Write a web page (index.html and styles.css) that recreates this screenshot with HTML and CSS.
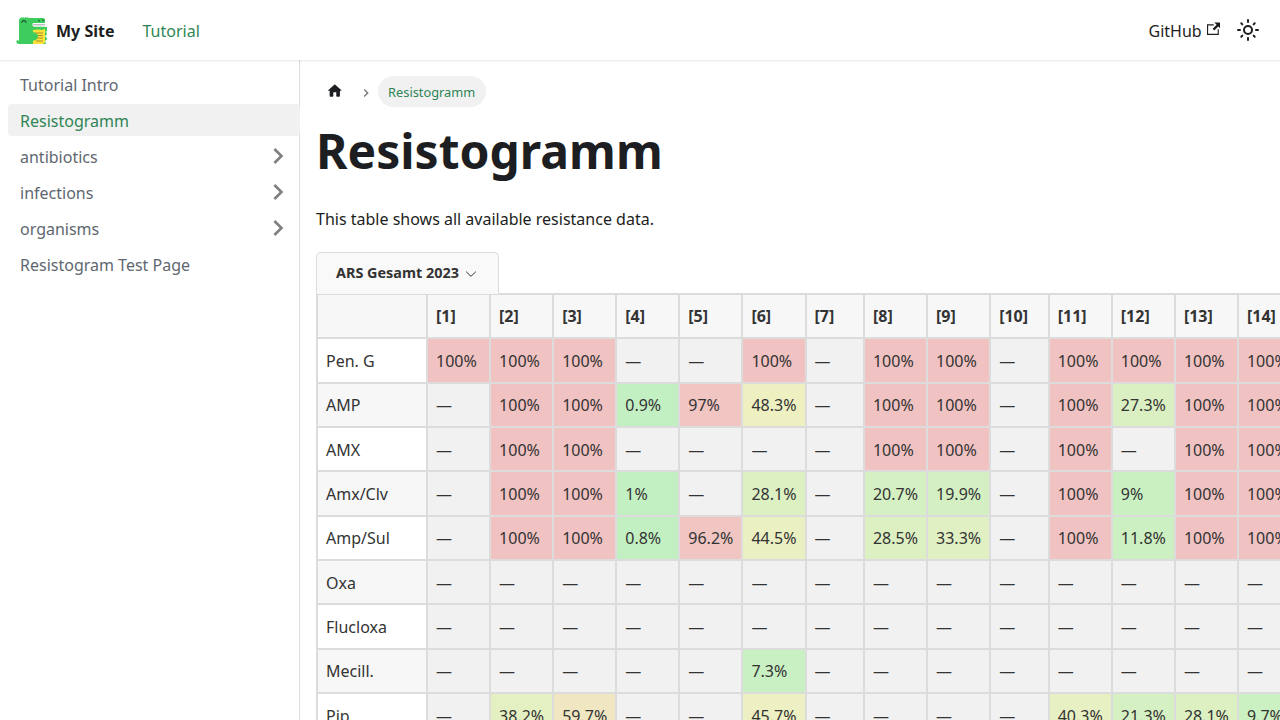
FILE: index.html
```html
<!DOCTYPE html>
<html lang="en">
<head>
<meta charset="utf-8">
<title>Resistogramm | My Site</title>
<link rel="stylesheet" href="styles.css">
</head>
<body>
<nav class="navbar">
  <a class="brand">
    <svg class="logo" viewBox="0 0 32 32" width="32" height="32">
      <path fill="#3ecc5f" d="M3 25V4.500Q3 2.500 4.500 2L5.500 1 6.500 2 7.500 1 8.500 2 9.500 1 10.500 2 11.500 1 12.500 2H27Q29 2 29 4V11H31V15L29 16V28H3Q1 28 .3 26Q.2 24.500 1.500 24Z"/>
      <path fill="#3ecc5f" d="M29 15L31.300 18 29 20 31.500 23 29 25 30 28H28V15Z"/>
      <path fill="#fff" d="M17 7H31.500V10.700H18Q16.300 10.300 16.300 8.800Z"/>
      <path fill="none" stroke="#777" stroke-width=".8" d="M17 9.300l1-1 1 1 1-1 1 1 1-1 1 1 1-1 1 1 1-1 1 1 1-1 1 1"/>
      <path fill="#ffe236" d="M17 14Q22 12.800 26 14L29 12.700V26Q28.500 27.800 26 28H17Z"/>
      <path fill="none" stroke="#887b36" stroke-width=".8" d="M19 17h8M21 19.500h6M20 22h7M20 25h7"/>
      <path fill="#3ecc5f" d="M16 16l3 .5 3 2.500v2l-2 3-4 1z"/>
      <path fill="none" stroke="#1c4f2c" stroke-width="1.100" d="M5.500 6.800L6.300 5.300Q8 3.800 9.500 5.300L10.300 6.800M22 4.800h2M26 4.300h2"/>
    </svg>
    <b>My Site</b>
  </a>
  <a class="nav-link active">Tutorial</a>
  <a class="nav-link github">GitHub<svg class="external" viewBox="0 0 24 24" width="13.500" height="13.500"><path fill="currentColor" d="M21 13v10h-21v-19h12v2h-10v15h17v-8h2zm3-12h-10.988l4.035 4-6.977 7.070 2.828 2.828 6.977-7.070 4.125 4.172v-11z"/></svg></a>
  <button class="theme-toggle" aria-label="Switch theme"><svg viewBox="0 0 24 24" width="24" height="24" fill="none" stroke="currentColor" stroke-width="2"><circle cx="12" cy="12" r="4"/><path stroke-linecap="round" d="M12 2v2M12 20v2M2 12h2M20 12h2M5.280 5.280l1.060 1.060M17.660 17.660l1.060 1.060M5.280 18.720l1.060-1.060M17.660 6.340l1.060-1.060"/></svg></button>
</nav>
<div class="layout">
  <aside class="sidebar">
    <a class="menu-item">Tutorial Intro</a>
    <a class="menu-item current">Resistogramm</a>
    <a class="menu-item">antibiotics<svg class="caret" viewBox="0 0 24 24"><path d="M7.410 15.410L12 10.830l4.590 4.580L18 14l-6-6-6 6z"/></svg></a>
    <a class="menu-item">infections<svg class="caret" viewBox="0 0 24 24"><path d="M7.410 15.410L12 10.830l4.590 4.580L18 14l-6-6-6 6z"/></svg></a>
    <a class="menu-item">organisms<svg class="caret" viewBox="0 0 24 24"><path d="M7.410 15.410L12 10.830l4.590 4.580L18 14l-6-6-6 6z"/></svg></a>
    <a class="menu-item">Resistogram Test Page</a>
  </aside>
  <main class="content">
    <div class="breadcrumbs">
      <a class="home"><svg viewBox="0 0 24 24" width="17.600" height="17.600"><path fill="currentColor" d="M10 19v-5h4v5c0 .55.45 1 1 1h3c.55 0 1-.45 1-1v-7h1.700c.46 0 .68-.57.33-.87L12.670 3.600c-.38-.34-.96-.34-1.340 0l-8.360 7.530c-.34.3-.13.87.33.87H5v7c0 .55.45 1 1 1h3c.55 0 1-.45 1-1z"/></svg></a>
      <svg class="separator" viewBox="0 0 24 24"><path d="M7.410 15.410L12 10.830l4.590 4.580L18 14l-6-6-6 6z"/></svg>
      <span class="crumb">Resistogramm</span>
    </div>
    <h1>Resistogramm</h1>
    <p class="intro">This table shows all available resistance data.</p>
    <button class="source-tab">ARS Gesamt 2023<svg viewBox="0 0 12 12" width="12" height="12" fill="none" stroke="currentColor" stroke-width="1"><path d="M1.200 3.700L6 8.300l4.800-4.600"/></svg></button>
    <table class="resistance"><colgroup id="cols"></colgroup><thead id="head"></thead><tbody id="body"></tbody></table>
  </main>
</div>
<script src="table.js"></script>
</body>
</html>
```
FILE: styles.css
```css
* { box-sizing: border-box; }
body {
  margin: 0;
  height: 720px;
  overflow: hidden;
  display: flex;
  flex-direction: column;
  background: #fff;
  color: #1c1e21;
  font: 16px/1.65 "Noto Sans", sans-serif;
}
button { font: inherit; color: inherit; border: 0; background: none; margin: 0; }
svg { flex: none; }
.navbar {
  position: relative;
  z-index: 1;
  flex: none;
  display: flex;
  align-items: center;
  height: 60px;
  padding: 1px 16px 0;
  background: #fff;
  box-shadow: 0 1px 2px 0 rgba(0, 0, 0, .1);
}
.brand { display: flex; align-items: center; gap: 8px; margin-right: 16px; }
.logo { margin-top: 2px; }
.brand b { padding-top: 1px; }
.nav-link { padding: 5px 12px 4px; }
.nav-link.active, .menu-item.current { color: #2e8555; }
.github { display: flex; margin-left: auto; padding-right: 0; }
.external { margin: 4.500px 0 0 4.800px; }
.theme-toggle { display: flex; padding: 0; margin: -1px 4px 0 16px; }
.layout { flex: 1; min-height: 0; display: flex; }
.sidebar {
  flex: none;
  width: 300px;
  padding: 8px 0 8px 8px;
  border-right: 1px solid #dadde1;
}
.menu-item {
  display: flex;
  align-items: center;
  justify-content: space-between;
  width: 292px;
  height: 32px;
  margin-bottom: 4px;
  padding: 2px 6px 0 12px;
  border-radius: 4px;
  color: #606770;
  line-height: 20px;
}
.menu-item.current { background: #f1f1f1; }
.caret { width: 32px; height: 32px; margin-top: -2px; fill: #808080; transform: rotate(90deg); }
.content { flex: 1; min-width: 0; overflow: hidden; padding: 16px 0 0 16px; }
.breadcrumbs { display: flex; align-items: center; height: 31px; }
.home { display: flex; margin: -2px 0 0 10px; }
.separator { width: 16px; height: 16px; margin: 2px 4px 0 14px; fill: #777; transform: rotate(90deg); }
.crumb {
  height: 31px;
  padding: 6px 10.500px 0;
  border-radius: 24px;
  background: #f1f1f1;
  color: #2e8555;
  font-size: 12.800px;
  line-height: 21px;
}
h1 { margin: 14px 0 25px; font-size: 48px; line-height: 60px; }
.intro { margin: 0 0 20px; }
.source-tab {
  position: relative;
  display: flex;
  align-items: center;
  gap: 6px;
  width: 183px;
  height: 42px;
  padding: 0 0 1px 19px;
  border: 1px solid #dcdcdc;
  border-bottom-color: #f9f9f9;
  border-radius: 5px 5px 0 0;
  background: #f9f9f9;
  color: #333;
  font-size: 14.400px;
  font-weight: 700;
  white-space: nowrap;
}
.source-tab svg { margin-top: 3px; }
.resistance {
  margin-top: -1.600px;
  table-layout: fixed;
  border-collapse: collapse;
  color: #333;
}
.resistance th, .resistance td {
  padding: 8.600px 8px 7.400px;
  border: 2px solid #dcdcdc;
  text-align: left;
  font-weight: 400;
  white-space: nowrap;
}
.resistance thead th { background: #f7f7f7; font-weight: 700; }
.resistance tbody tr:nth-child(even) th { background: #f7f7f7; }
.resistance td { background: #f1f1f1; }
```
FILE: table.js
```js
const widths = [110, 63.08, 63.08, 63.08, 63.08, 63.08, 63.2, 58.4, 63.08, 63.08, 58.6, 63.08, 63.08, 63.08, 63.08];
const rows = [
  ["Pen. G", 100, 100, 100, null, null, 100, null, 100, 100, null, 100, 100, 100, 100],
  ["AMP", null, 100, 100, 0.9, 97, 48.3, null, 100, 100, null, 100, 27.3, 100, 100],
  ["AMX", null, 100, 100, null, null, null, null, 100, 100, null, 100, null, 100, 100],
  ["Amx/Clv", null, 100, 100, 1, null, 28.1, null, 20.7, 19.9, null, 100, 9, 100, 100],
  ["Amp/Sul", null, 100, 100, 0.8, 96.2, 44.5, null, 28.5, 33.3, null, 100, 11.8, 100, 100],
  ["Oxa"],
  ["Flucloxa"],
  ["Mecill.", null, null, null, null, null, 7.3],
  ["Pip", null, 38.2, 59.7, null, null, 45.7, null, null, null, null, 40.3, 21.3, 28.1, 9.7]
];
const columns = widths.length - 1;
document.querySelector(".resistance").style.width = widths.reduce((a, b) => a + b, 2) + "px";
document.getElementById("cols").innerHTML = widths.map(w => `<col style="width:${w}px">`).join("");
document.getElementById("head").innerHTML = "<tr><th></th>" +
  Array.from({ length: columns }, (_, i) => `<th>[${i + 1}]</th>`).join("") + "</tr>";
// Hue runs from green (0% resistant) to red (100% resistant).
document.getElementById("body").innerHTML = rows.map(row => `<tr><th>${row[0]}</th>` +
  Array.from({ length: columns }, (_, i) => {
    const value = row[i + 1];
    return value == null ? "<td>—</td>"
      : `<td style="background:hsl(${120 - value * 1.2},60%,85%)">${value}%</td>`;
  }).join("") + "</tr>").join("");
```
